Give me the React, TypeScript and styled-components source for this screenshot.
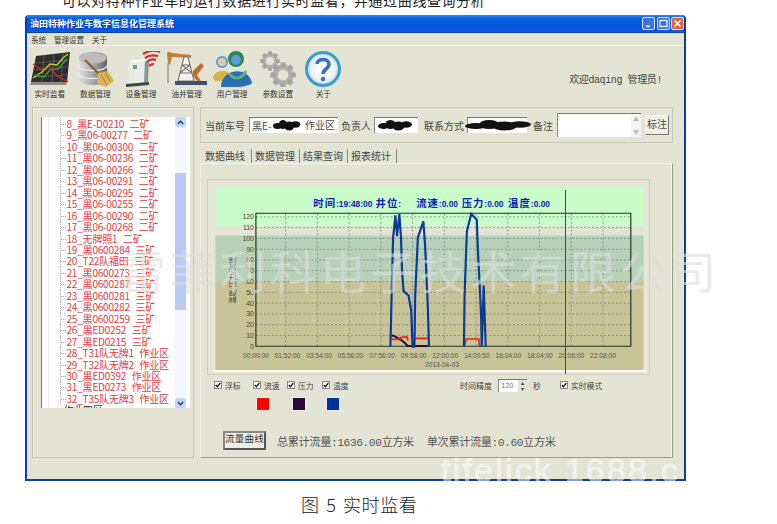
import React from "react";
import styled, { createGlobalStyle } from "styled-components";

const CJK = `"Noto Sans CJK SC", "Liberation Sans", sans-serif`;
const Global = createGlobalStyle`
  html, body { margin: 0; padding: 0; background: #fff; }
  * { box-sizing: border-box; }
  body { font-family: ${CJK}; }
`;

const Page = styled.div`position: relative; width: 777px; height: 524px; overflow: hidden; background: #fff;`;
const TopClip = styled.div`
  height: 15px; padding-left: 62px; overflow: hidden; font-size: 14px; line-height: 14px; color: #222; white-space: nowrap; letter-spacing: 0.6px;
  & > span { display: block; margin-top: -7px; }
`;
const Win = styled.div`
  width: 661px; height: 466px; margin-left: 25px; background: #e4e4d4;
  border: solid #0a3ea8; border-width: 0 2px 2px 2px; border-radius: 4px 4px 0 0; display: flex; flex-direction: column; overflow: hidden;
`;
const TitleBar = styled.div`
  height: 18px; flex: none; display: flex; align-items: center; padding: 0 2px 0 3px; margin: 0 -2px;
  background: linear-gradient(#2f8cf0 0, #0a62e2 3px, #0055dd 60%, #0a5ae8 100%); border-bottom: 1px solid #0a40b0;
`;
const TitleText = styled.div`font-size: 9px; font-weight: 700; color: #fff; padding-left: 2px; flex: 1; letter-spacing: 0; text-shadow: 1px 1px 0 #0a3a98;`;
const WinBtn = styled.div<{ $c: string }>`
  width: 13px; height: 13px; margin-left: 1.5px; border: 1px solid #dfe8ff; border-radius: 2px; background: ${p => p.$c};
  display: flex; align-items: center; justify-content: center; color: #fff;
`;
const Menu = styled.div`height: 13px; flex: none; display: flex; gap: 8px; padding-left: 4px; align-items: center; font-size: 7.5px; color: #333; border-bottom: 1px solid #eeeee2;`;
const Toolbar = styled.div`height: 61px; flex: none; display: flex; align-items: flex-start; padding: 5px 0 0 0;`;
const ToolBtn = styled.div`width: 45.6px; display: flex; flex-direction: column; align-items: center; flex: none;`;
const ToolIcon = styled.svg`width: 40px; height: 36px; display: block;`;
const ToolLabel = styled.div`font-size: 7.7px; line-height: 10px; margin-top: 2px; color: #333; white-space: nowrap;`;
const Welcome = styled.div`margin-left: auto; margin-right: 22px; margin-top: 20px; font-size: 10px; color: #444; font-family: "Liberation Mono", ${CJK}; letter-spacing: -0.4px;`;

const Body = styled.div`flex: 1; display: flex; min-height: 0; padding-left: 5px; align-items: flex-start;`;
const LeftGroup = styled.div`
  width: 162px; height: 351px; flex: none; border: 1px solid #c4c4b2; box-shadow: inset 1px 1px 0 #f2f2e8; padding: 9px 3px 0 8px;
`;
const Tree = styled.div`height: 291px; background: #fff; border-left: 1px solid #77776c; display: flex; position: relative;`;
const TreeList = styled.div`flex: 1; margin-left: 6px; border-left: 1px solid #ececec; padding: 1px 0 0 11px; overflow: hidden; position: relative;`;
const Row = styled.div`
  height: 11.46px; line-height: 11.46px; font-size: 10px; color: #e23a3a; white-space: nowrap; padding-left: 5.5px; position: relative; letter-spacing: -0.2px; word-spacing: 3.5px;
  border-left: 1px dotted #b8b8b8;
  &::before { content: ""; position: absolute; left: 0; top: 6px; width: 5px; border-top: 1px dotted #aaa; }
`;
const RowBlack = styled(Row)`color: #333; border-left: none; margin-left: -2px; &::before { display: none; }`;
const Scroll = styled.div`width: 11px; flex: none; margin-right: 4px; background: #f5f6fb; display: flex; flex-direction: column; height: 100%;`;
const ScrollBtn = styled.div`height: 10px; flex: none; background: #c6d4f8; border-radius: 2px; color: #1a3a8a; display: flex; align-items: center; justify-content: center;`;
const Thumb = styled.div`width: 100%; height: 137px; margin-top: 46px; background: #b9c9f5; flex: none;`;
const ScrollGap = styled.div`flex: 1;`;

const RightCol = styled.div`width: 473px; margin-left: 6px; flex: none; display: flex; flex-direction: column;`;
const CarBar = styled.div`
  height: 36px; border: 1px solid #c8c8b6; display: flex; align-items: center; padding-left: 4px; font-size: 10px; color: #444; position: relative;
`;
const Lbl = styled.span<{ $w: number; $pad?: number }>`width: ${p => p.$w}px; padding-left: ${p => p.$pad ?? 0}px; flex: none; white-space: nowrap;`;
const Field = styled.div<{ $w: number }>`
  width: ${p => p.$w}px; height: 16px; flex: none; background: #fff; border-top: 1px solid #777; border-left: 1px solid #888; position: relative; display: flex; align-items: center;
  font-size: 10px; color: #444; padding-left: 2px; white-space: nowrap;
`;
const FieldEnd = styled.span`position: absolute; right: 3px; top: 0; line-height: 14px;`;
const Blot = styled.svg<{ $l: number; $w: number }>`position: absolute; left: ${p => p.$l}px; top: 1px; width: ${p => p.$w}px; height: 13px;`;
const NoteBox = styled.div`
  width: 84px; height: 24px; flex: none; background: #fff; border-top: 1px solid #777; border-left: 1px solid #888; display: flex; justify-content: flex-end;
`;
const NoteScroll = styled.div`width: 10px; background: #f4f4f4; display: flex; flex-direction: column; justify-content: space-between; color: #b8bcb8; align-items: center; font-size: 6px; line-height: 10px;`;
const MarkBtn = styled.div`width: 24px; height: 20px; margin-left: 4px; flex: none; background: #f0f0e4; border: 1px solid #f4f4ee; border-right-color: #77776a; border-bottom-color: #77776a; font-size: 10px; color: #444; text-align: center; line-height: 16px;`;

const Tabs = styled.div`display: flex; margin-top: 5px; height: 15px; padding-left: 5px; align-items: flex-end; font-size: 10px; color: #444;`;
const Tab = styled.div<{ $w: number }>`width: ${p => p.$w}px; height: 14px; line-height: 13px; border-right: 1px solid #8a8a7c; flex: none; white-space: nowrap; padding-left: ${p => (p.$w > 47 ? 3 : 0)}px;`;
const TabPanel = styled.div`
  height: 295px; border: solid #9a9a88; border-width: 1px 1px 1px 0; border-top-color: #f4f4ea; border-left: 1px solid #f0f0e6; box-shadow: inset -1px 0 0 #f4f4ea; display: flex; flex-direction: column;
`;
const ChartBox = styled.div`width: 443px; height: 196px; margin: 15px 0 0 6px; flex: none; border: 1px solid #cfcfbe; background: #e6e6d6; padding: 8px 3px 0 5px; position: relative;`;
const ChartSvg = styled.svg`width: 433px; height: 184px; display: block; border-bottom: 2px solid #fbfbf2; overflow: visible;`;
const Controls = styled.div`display: flex; align-items: center; height: 14px; margin: 3px 0 0 13px; font-size: 8px; color: #444;`;
const Check = styled.div<{ $w: number }>`width: ${p => p.$w}px; flex: none; display: flex; align-items: center; gap: 3px; white-space: nowrap; font-size: 7.8px;`;
const Box = styled.span`width: 8px; height: 8px; background: #fff; border: 1px solid #888; display: flex; align-items: center; justify-content: center; flex: none;`;
const Spin = styled.div`width: 29px; height: 13px; background: #fff; border-top: 1px solid #777; border-left: 1px solid #888; margin: 0 6px 0 6px; display: flex; flex: none; font: 7.5px "Liberation Sans", sans-serif; color: #777; padding-left: 2px; align-items: center; justify-content: space-between;`;
const SpinBtn = styled.span`width: 9px; height: 100%; background: #e4e4d6; color: #333; font-size: 6px; line-height: 6px; text-align: center;`;
const Swatches = styled.div`display: flex; margin: 5px 0 0 55px; height: 14px;`;
const Swatch = styled.div<{ $c: string; $gap: number }>`width: 14px; height: 14px; background: ${p => p.$c}; margin-right: ${p => p.$gap}px; border: 1px solid #eeeee6; flex: none;`;
const Totals = styled.div`display: flex; align-items: center; margin: 20px 0 0 22px; height: 19px; font-size: 11.2px; color: #555; font-family: "Liberation Mono", ${CJK}; letter-spacing: -0.4px; white-space: nowrap;`;
const FlowBtn = styled.div`width: 43px; height: 19px; flex: none; border: 2px solid #555; border-top-color: #8a8a80; border-left-color: #8a8a80; background: #eeeee2; font-size: 9.5px; text-align: center; line-height: 14px; color: #333; margin-right: 11px; letter-spacing: 0.2px;`;
const TotalGap = styled.span`width: 13px; flex: none;`;

const Caption = styled.div`margin: 13px 0 0 301px; font-size: 18px; line-height: 20px; color: #222; font-weight: 300; white-space: pre; letter-spacing: 0.6px; word-spacing: 2px;`;
const Mark1 = styled.div`position: absolute; left: 120px; top: 244px; font-size: 46px; line-height: 50px; letter-spacing: 4px; color: rgba(222, 222, 222, 0.62); white-space: nowrap; pointer-events: none;`;
const Mark2 = styled.div`position: absolute; left: 441px; top: 453px; width: 245px; height: 28px; overflow: hidden; font: 400 34px/34px "Liberation Sans", sans-serif; -webkit-text-stroke: 0.7px rgba(255, 255, 255, 0.5); color: rgba(255, 255, 255, 0.5); letter-spacing: 2.2px; white-space: pre;`;

const rows = ["8_黑E-D0210 二矿","9_黑06-00277 二矿","10_黑06-00300 二矿","11_黑06-00236 二矿","12_黑06-00266 二矿","13_黑06-00291 二矿","14_黑06-00295 二矿","15_黑06-00255 二矿","16_黑06-00290 二矿","17_黑06-00268 二矿","18_无牌照1 二矿","19_黑0600284 三矿","20_T22队福田 三矿","21_黑0600273 三矿","22_黑0600287 三矿","23_黑0600281 三矿","24_黑0600282 三矿","25_黑0600259 三矿","26_黑ED0252 三矿","27_黑ED0215 三矿","28_T31队无牌1 作业区","29_T32队无牌2 作业区","30_黑ED0392 作业区","31_黑ED0273 作业区","32_T35队无牌3 作业区"];

const ChartIcon = () => (
  <ToolIcon viewBox="0 0 40 36">
    <path d="M6 5 L40 1 L37 31 L1 31 Z" fill="#2e2e2c" />
    <path d="M5 12 L39 9 M4 19 L38 16 M3 26 L37 24 M14 4 L12 31 M24 3 L22 31 M33 2 L31 31" stroke="#666" strokeWidth=".7" />
    <path d="M1 31 L37 31 L36 34 L0 34Z" fill="#8a8a86" />
    <path d="M3 13 L12 19 L19 15 L27 25 L33 28 L38 31" stroke="#d82828" strokeWidth="1.4" fill="none" />
    <path d="M3 27 L12 21 L20 13 L27 14 L33 7 L38 3" stroke="#b8d038" strokeWidth="1.4" fill="none" />
    <path d="M4 24 L14 26 L20 19 L28 18 L37 8" stroke="#38a838" strokeWidth="1.2" fill="none" />
  </ToolIcon>
);
const DbIcon = () => (
  <ToolIcon viewBox="0 0 40 36">
    <defs><linearGradient id="g1" x1="0" x2="1"><stop offset="0" stopColor="#e4e4e4" /><stop offset=".5" stopColor="#a8a8a8" /><stop offset="1" stopColor="#666" /></linearGradient></defs>
    <path d="M3 7 C3 -1 32 -1 32 7 L32 28 C32 36 3 36 3 28 Z" fill="url(#g1)" />
    <ellipse cx="17.5" cy="7" rx="14" ry="5.5" fill="#bcbcbc" />
    <path d="M3 15 C6 21 29 21 32 15 M3 23 C6 29 29 29 32 23" stroke="#eee" strokeWidth="1.3" fill="none" />
    <path d="M10 9 L25 24" stroke="#8a5a28" strokeWidth="2" />
    <path d="M23 22 L33 20 L39 30 L31 36 L22 33 Z" fill="#d8b458" />
    <path d="M26 24 L32 34 M30 22 L36 31" stroke="#9a7a2c" strokeWidth=".8" />
  </ToolIcon>
);
const DeviceIcon = () => (
  <ToolIcon viewBox="0 0 40 36">
    <path d="M8 10 L24 8 L23 32 L7 33 Z" fill="#e8ece8" />
    <path d="M24 8 L28 10 L27 31 L23 32 Z" fill="#8f9690" />
    <path d="M8 10 L24 8 L28 10 L12 11 Z" fill="#fafafa" />
    <rect x="12" y="14" width="4" height="4" fill="#6aa878" />
    <path d="M5 33 L28 31 L28 34 L5 36Z" fill="#444" />
    <path d="M22 3 C28 -1 34 -1 39 1 M24 7 C28 4 33 4 37 5 M26 11 C29 8 32 8 35 9 M28 15 C30 13 32 13 33 13" stroke="#d82c2c" strokeWidth="2.2" fill="none" />
  </ToolIcon>
);
const OilIcon = () => (
  <ToolIcon viewBox="0 0 40 36">
    <path d="M0 3 C0 0 3 1 5 2 L24 4 L24 7 L5 6 L3 14 L1 12 Z" fill="#c08038" />
    <path d="M17 6 L11 30 H27 L21 6Z M15 14 H23 M13 22 H25 M15 14 L25 22 M23 14 L13 22" stroke="#777" strokeWidth="1.1" fill="#f2f2ea" />
    <path d="M26 20 L34 12 L37 15 L30 24 L34 30 L30 30 L26 25Z" fill="#c46c30" />
    <path d="M8 30 H40 V34 H8 Z" fill="#44506a" />
    <path d="M1 12 V32" stroke="#777" strokeWidth="1" />
  </ToolIcon>
);
const UsersIcon = () => (
  <ToolIcon viewBox="0 0 40 36">
    <circle cx="10" cy="11" r="6" fill="#5aa0dc" />
    <circle cx="10" cy="11" r="4" fill="#e8c8a0" />
    <path d="M1 27 C2 18 18 18 20 26 L16 30 L3 30 Z" fill="#d8b048" />
    <circle cx="24" cy="8" r="8" fill="#2c8850" />
    <circle cx="24" cy="9" r="5" fill="#5a98d8" />
    <path d="M9 36 C9 18 36 14 40 32 C38 36 14 38 9 36Z" fill="#2a70b0" />
    <path d="M17 22 C22 30 30 28 34 20" stroke="#60b080" strokeWidth="3" fill="none" />
  </ToolIcon>
);
const Gear = ({ x, y, r }: { x: number; y: number; r: number }) => (
  <g transform={`translate(${x} ${y})`}>
    <circle r={r * 0.72} fill="none" stroke="#b4b4b0" strokeWidth={r * 0.5} />
    {[0, 45, 90, 135, 180, 225, 270, 315].map(a => (
      <rect key={a} x={-r * 0.22} y={-r * 1.15} width={r * 0.44} height={r * 0.5} fill="#a4a4a0" transform={`rotate(${a})`} />
    ))}
  </g>
);
const GearsIcon = () => (
  <ToolIcon viewBox="0 0 40 36">
    <Gear x={12} y={10} r={8.5} />
    <Gear x={25} y={24} r={11} />
  </ToolIcon>
);
const HelpIcon = () => (
  <ToolIcon viewBox="0 0 40 36">
    <defs><radialGradient id="g2"><stop offset="0" stopColor="#fff" /><stop offset=".7" stopColor="#eef4f8" /><stop offset="1" stopColor="#bcd4e4" /></radialGradient></defs>
    <circle cx="20" cy="18" r="16.5" fill="url(#g2)" stroke="#3c9cd0" strokeWidth="3" />
    <path d="M14 13 C14 7 26 7 26 13 C26 18 20 18 20 23" stroke="#3a6ec8" strokeWidth="3.6" fill="none" />
    <circle cx="20" cy="28" r="2.3" fill="#3a6ec8" />
  </ToolIcon>
);

const tools: [React.FC, string][] = [[ChartIcon, "实时监看"], [DbIcon, "数据管理"], [DeviceIcon, "设备管理"], [OilIcon, "油井管理"], [UsersIcon, "用户管理"], [GearsIcon, "参数设置"], [HelpIcon, "关于"]];

const Scribble = ({ l, w }: { l: number; w: number }) => (
  <Blot $l={l} $w={w} viewBox="0 0 60 13" preserveAspectRatio="none">
    <g fill="#111">
      <ellipse cx="10" cy="7" rx="10" ry="3" />
      <ellipse cx="22" cy="5.5" rx="9" ry="4.5" />
      <ellipse cx="36" cy="7" rx="11" ry="4.5" />
      <ellipse cx="50" cy="5.5" rx="10" ry="3.2" />
    </g>
  </Blot>
);

const Tick = () => (
  <svg width="6" height="6" viewBox="0 0 6 6"><path d="M.7 3 L2.4 4.8 L5.3 1" stroke="#111" strokeWidth="1.3" fill="none" /></svg>
);

const ax = (x: number) => 205 + x / 3;
const ay = (y: number) => 205 + y / 3;
const bx = (x: number) => 430 + x / 3;
const toPts = (pts: number[][], fx: (n: number) => number) => pts.map(([x, y]) => `${fx(x).toFixed(1)},${ay(y).toFixed(1)}`).join(" ");
const times = ["00:00:00", "01:52:00", "03:54:00", "05:56:00", "07:56:00", "09:58:00", "12:00:00", "14:00:50", "16:04:00", "18:04:00", "20:06:00", "22:08:00"];

const Chart = () => (
  <ChartSvg viewBox="213 188 433 184">
    <rect x="213" y="188" width="433" height="39" fill="#c8fcc8" />
    <rect x="213" y="227" width="433" height="9" fill="#e4e4d4" />
    <rect x="213" y="236" width="433" height="47" fill="#b8d2ba" />
    <rect x="213" y="283" width="433" height="89" fill="#c8c498" />
    {Array.from({ length: 12 }, (_, i) => (
      <line key={i} x1="254" y1={348 - (i + 1) * 10.9} x2="633" y2={348 - (i + 1) * 10.9} stroke="#777" strokeWidth=".7" strokeDasharray="2 2" />
    ))}
    {Array.from({ length: 11 }, (_, i) => (
      <line key={i} x1={284 + 32.1 * i} y1="214" x2={284 + 32.1 * i} y2="348" stroke="#777" strokeWidth=".7" strokeDasharray="2 2" />
    ))}
    <polyline points="254,213.5 633,213.5 633,348 254,348 254,213.5" fill="none" stroke="#223322" strokeWidth="1.2" />
    {Array.from({ length: 13 }, (_, i) => (
      <text key={i} x="252" y={350.5 - i * 10.9} fontSize="7" fill="#444" textAnchor="end" fontFamily="Liberation Sans">{i * 10}</text>
    ))}
    {times.map((t, i) => (
      <text key={t} x={254 + 31.9 * i} y="359.5" fontSize="6.7" fill="#555" textAnchor="middle" fontFamily="Liberation Sans">{t}</text>
    ))}
    <text x="425" y="369" fontSize="6.7" fill="#555" fontFamily="Liberation Sans">2013-04-03</text>
    <text x="233" y="305" fontSize="7" fill="#333" transform="rotate(-90 233 305)" fontFamily={CJK}>温度/压力/流速</text>
    <text x="312" y="207" fontSize="10.5" fontWeight="700" fill="#1020c0" fontFamily={CJK} letterSpacing="1">时间<tspan fontSize="8.5" fontFamily="Liberation Sans" letterSpacing="0">:19:48:00</tspan></text>
    <text x="375" y="207" fontSize="10.5" fontWeight="700" fill="#1020c0" fontFamily={CJK} letterSpacing="1">井位<tspan fontSize="8.5" fontFamily="Liberation Sans">:</tspan></text>
    <text x="416" y="207" fontSize="10.5" fontWeight="700" fill="#1020c0" fontFamily={CJK} letterSpacing="1">流速<tspan fontSize="8.5" fontFamily="Liberation Sans" letterSpacing="0">:0.00</tspan></text>
    <text x="462" y="207" fontSize="10.5" fontWeight="700" fill="#1020c0" fontFamily={CJK} letterSpacing="1">压力<tspan fontSize="8.5" fontFamily="Liberation Sans" letterSpacing="0">:0.00</tspan></text>
    <text x="509" y="207" fontSize="10.5" fontWeight="700" fill="#1020c0" fontFamily={CJK} letterSpacing="1">温度<tspan fontSize="8.5" fontFamily="Liberation Sans" letterSpacing="0">:0.00</tspan></text>
    <polyline fill="none" stroke="#2a0a3a" strokeWidth="2" points={toPts([[558, 395], [570, 400], [590, 412], [600, 420], [607, 428], [622, 428], [630, 428], [668, 428]], ax)} />
    <polyline fill="none" stroke="#ee2020" strokeWidth="1.8" points={toPts([[558, 408], [575, 408], [590, 402], [605, 400], [608, 412]], ax)} />
    <polyline fill="none" stroke="#ee2020" strokeWidth="1.8" points={toPts([[630, 405], [668, 405]], ax)} />
    <polyline fill="none" stroke="#ee2020" strokeWidth="1.6" points={toPts([[105, 428], [110, 407], [148, 407], [150, 428]], bx)} />
    <polyline fill="none" stroke="#0a3a94" strokeWidth="2.2" points={toPts([[555, 430], [558, 300], [563, 100], [570, 32], [575, 95], [582, 28], [587, 100], [590, 200], [595, 262], [610, 275], [618, 320], [622, 430], [628, 430], [630, 280], [638, 100], [655, 50], [660, 120], [668, 300], [672, 430]], ax)} />
    <polyline fill="none" stroke="#0a3a94" strokeWidth="2.2" points={toPts([[103, 430], [105, 270], [112, 80], [125, 28], [142, 45], [145, 130], [150, 230], [155, 340], [157, 430], [160, 340], [163, 245], [166, 340], [169, 430]], bx)} />
    <line x1="567" y1="190" x2="567" y2="376" stroke="#445" strokeWidth="1" />
  </ChartSvg>
);

export default function App() {
  return (
    <Page>
      <Global />
      <TopClip><span>可以对特种作业车的运行数据进行实时监看，并通过曲线查询分析</span></TopClip>
      <Win>
        <TitleBar>
          <TitleText>油田特种作业车数字信息化管理系统</TitleText>
          <WinBtn $c="#3a70e8"><svg width="8" height="8" viewBox="0 0 8 8"><rect x="1" y="5.5" width="4" height="1.6" fill="#fff" /></svg></WinBtn>
          <WinBtn $c="#3a70e8"><svg width="9" height="9" viewBox="0 0 9 9"><rect x="1" y="1.5" width="7" height="6" fill="none" stroke="#fff" strokeWidth="1.2" /></svg></WinBtn>
          <WinBtn $c="#e0603a"><svg width="9" height="9" viewBox="0 0 9 9"><path d="M1.5 1.5 L7.5 7.5 M7.5 1.5 L1.5 7.5" stroke="#fff" strokeWidth="1.6" /></svg></WinBtn>
        </TitleBar>
        <Menu><span>系统</span><span>管理设置</span><span>关于</span></Menu>
        <Toolbar>
          {tools.map(([Icon, label]) => (
            <ToolBtn key={label}><Icon /><ToolLabel>{label}</ToolLabel></ToolBtn>
          ))}
          <Welcome>欢迎daqing 管理员!</Welcome>
        </Toolbar>
        <Body>
          <LeftGroup>
            <Tree>
              <TreeList>
                {rows.map(r => <Row key={r}>{r}</Row>)}
                <RowBlack>作业四区</RowBlack>
              </TreeList>
              <Scroll>
                <ScrollBtn><svg width="7" height="5" viewBox="0 0 7 5"><path d="M.8 4 L3.5 1.2 L6.2 4" stroke="#1a3a8a" strokeWidth="1.4" fill="none" /></svg></ScrollBtn>
                <Thumb />
                <ScrollGap />
                <ScrollBtn><svg width="7" height="5" viewBox="0 0 7 5"><path d="M.8 1 L3.5 3.8 L6.2 1" stroke="#1a3a8a" strokeWidth="1.4" fill="none" /></svg></ScrollBtn>
              </Scroll>
            </Tree>
          </LeftGroup>
          <RightCol>
            <CarBar>
              <Lbl $w={44}>当前车号</Lbl>
              <Field $w={89}>黑E-<Scribble l={23} w={27} /><FieldEnd>作业区</FieldEnd></Field>
              <Lbl $w={36} $pad={3}>负责人</Lbl>
              <Field $w={44}><Scribble l={3} w={34} /></Field>
              <Lbl $w={49} $pad={6}>联系方式</Lbl>
              <Field $w={60}><Scribble l={-3} w={66} /></Field>
              <Lbl $w={30} $pad={6}>备注</Lbl>
              <NoteBox><NoteScroll><span>▲</span><span>▼</span></NoteScroll></NoteBox>
              <MarkBtn>标注</MarkBtn>
            </CarBar>
            <Tabs>
              <Tab $w={47}>数据曲线</Tab>
              <Tab $w={48}>数据管理</Tab>
              <Tab $w={48}>结果查询</Tab>
              <Tab $w={49}>报表统计</Tab>
            </Tabs>
            <TabPanel>
              <ChartBox><Chart /></ChartBox>
              <Controls>
                <Check $w={39}><Box><Tick /></Box>浮标</Check>
                <Check $w={34}><Box><Tick /></Box>流速</Check>
                <Check $w={35}><Box><Tick /></Box>压力</Check>
                <Check $w={138}><Box><Tick /></Box>温度</Check>
                <span>时间精度</span>
                <Spin>120<SpinBtn>▴<br />▾</SpinBtn></Spin>
                <Check $w={27}>秒</Check>
                <Check $w={50}><Box><Tick /></Box>实时模式</Check>
              </Controls>
              <Swatches>
                <Swatch $c="#ff0000" $gap={22} />
                <Swatch $c="#2a0a3a" $gap={20} />
                <Swatch $c="#003399" $gap={0} />
              </Swatches>
              <Totals>
                <FlowBtn>流量曲线</FlowBtn>
                <span>总累计流量:1636.00立方米</span>
                <TotalGap />
                <span>单次累计流量:0.60立方米</span>
              </Totals>
            </TabPanel>
          </RightCol>
        </Body>
      </Win>
      <Caption>图 5 实时监看</Caption>
      <Mark1>雷菲利科电子技术有限公司</Mark1>
      <Mark2>tifelick 1688.c</Mark2>
    </Page>
  );
}
